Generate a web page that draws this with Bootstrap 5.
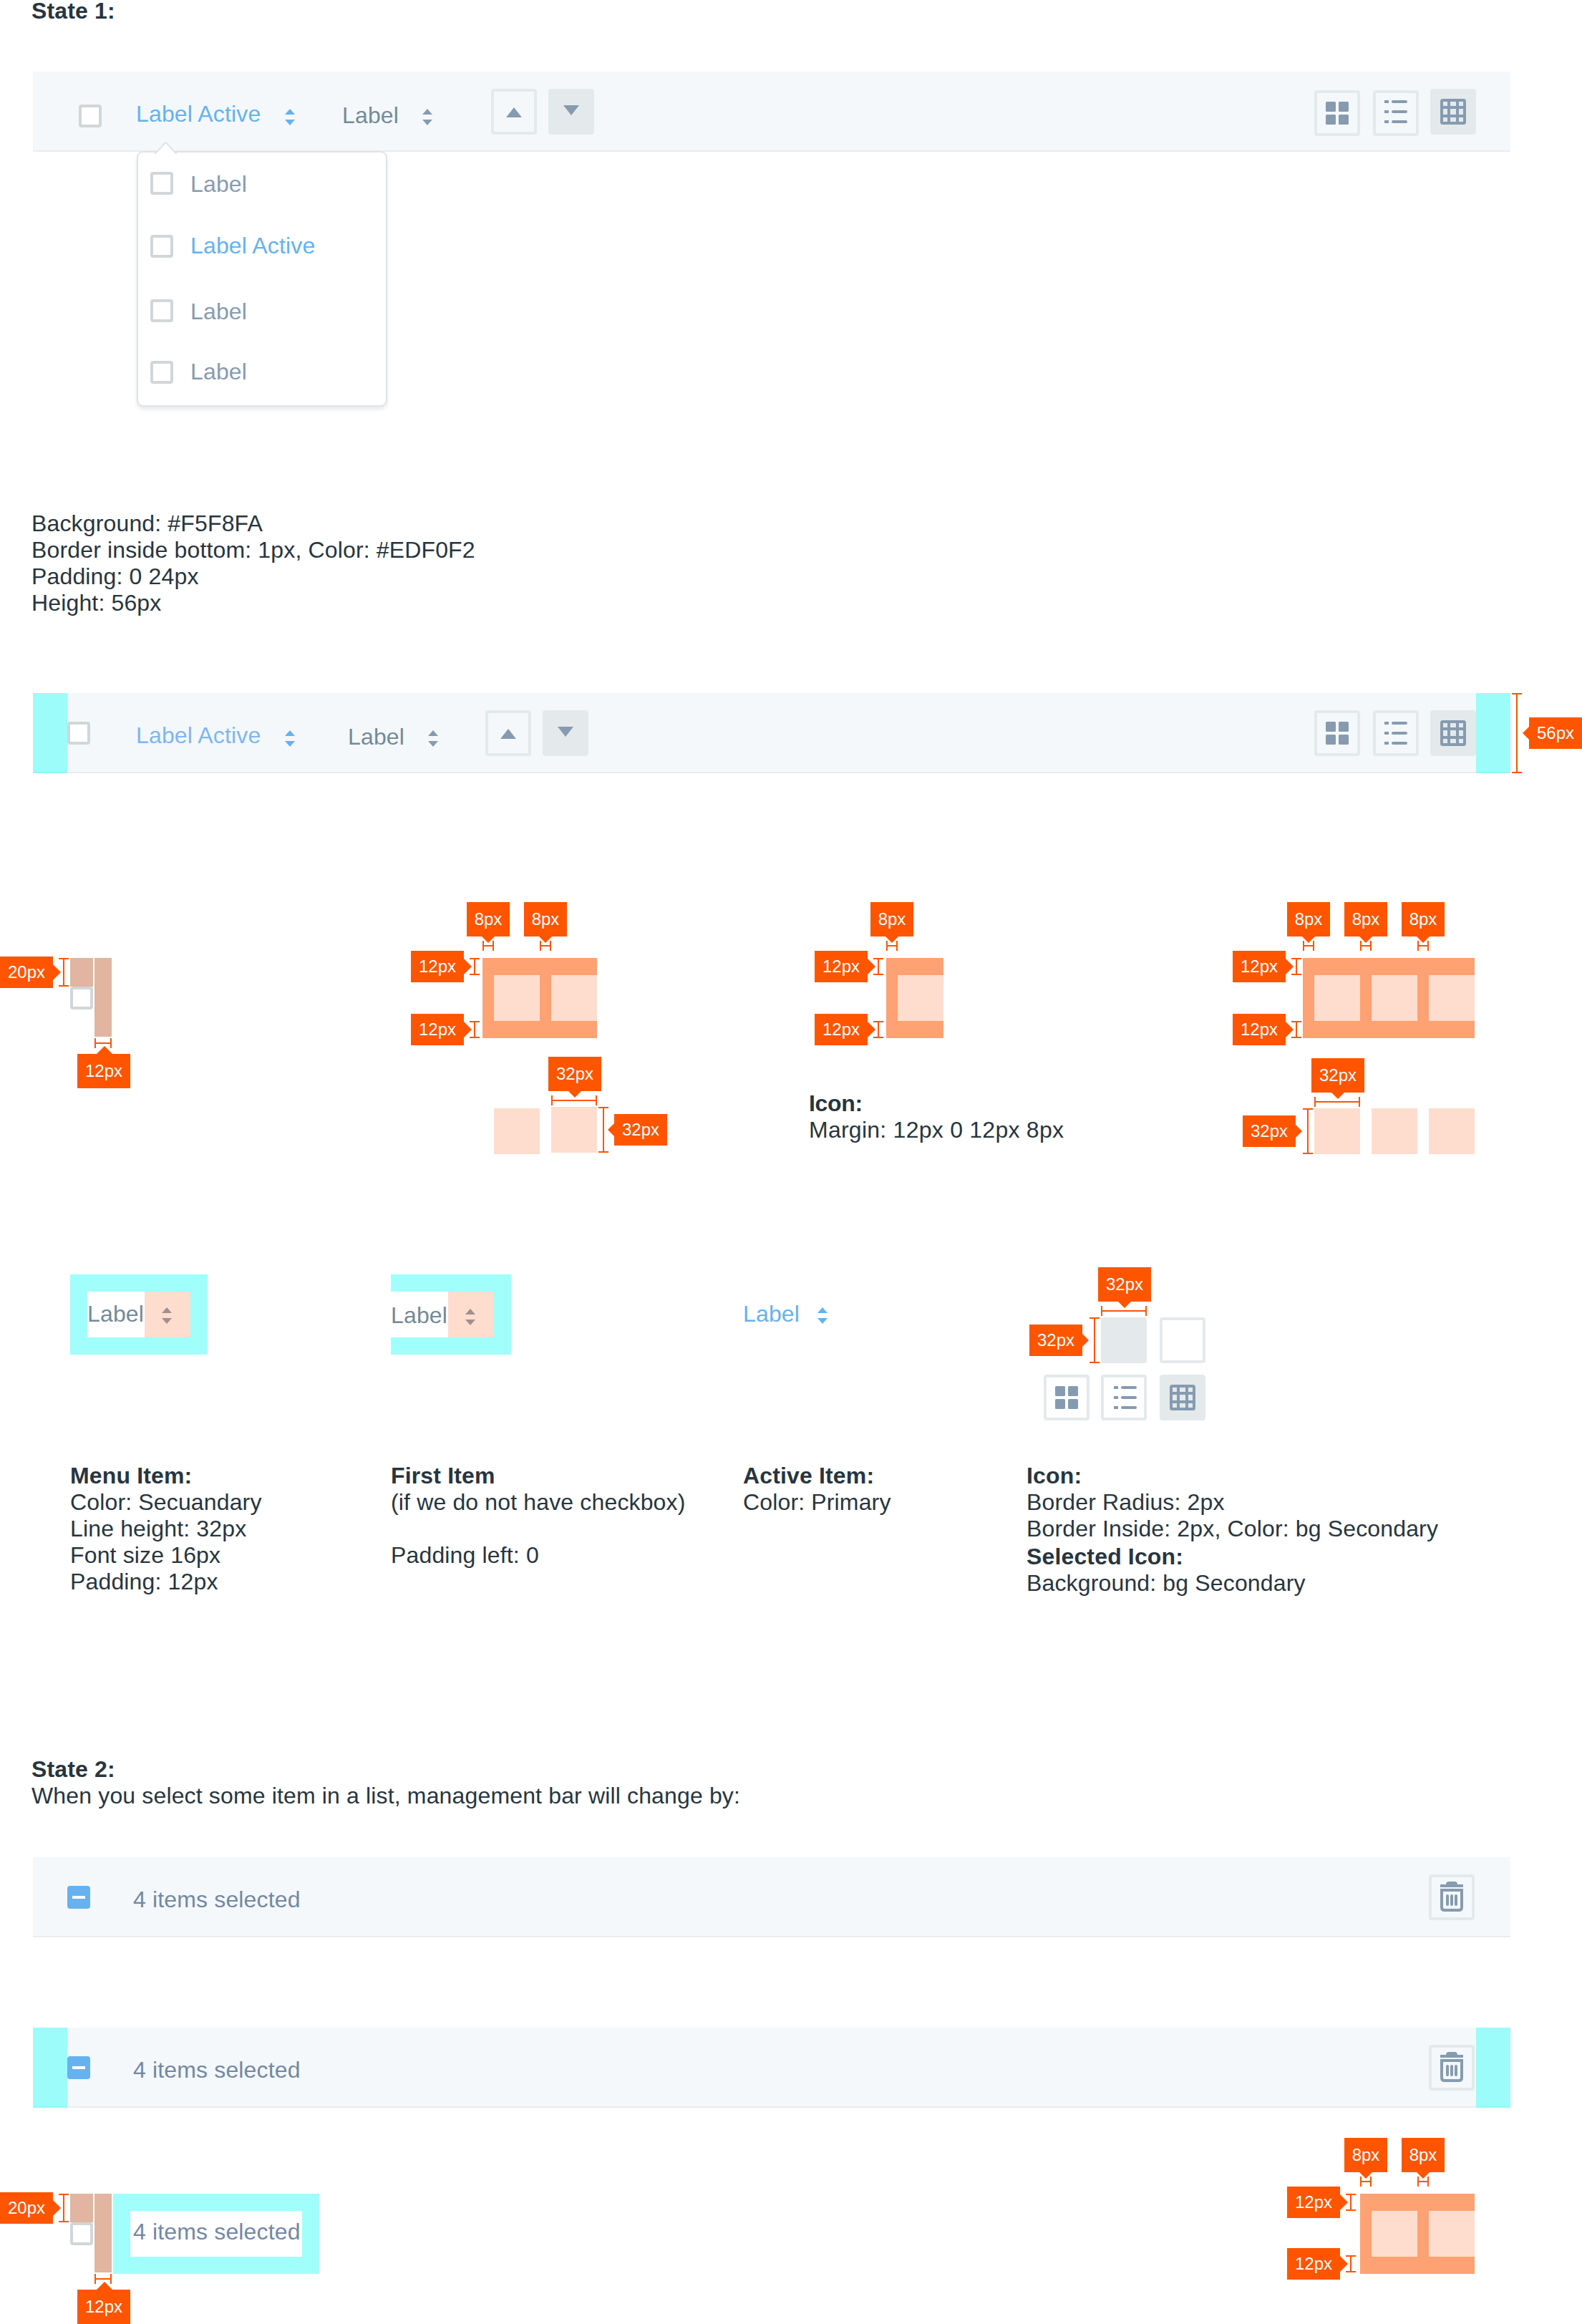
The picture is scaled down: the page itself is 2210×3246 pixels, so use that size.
<!DOCTYPE html>
<html lang="en">
<head>
<meta charset="utf-8">
<meta name="viewport" content="width=device-width, initial-scale=1">
<title>Management bar</title>
<link href="https://cdn.jsdelivr.net/npm/bootstrap@5.3.0/dist/css/bootstrap.min.css" rel="stylesheet">
<style>
  :root { --ink:#28353f; --slate:#869bb0; --label:#748a99; --sel:#7388a5; --blue:#64b2f1; --edge:#e4e9eb; --box:#d1d6d9;
          --hot:#ff5500; --pad:#fea173; --cell:#feddce; --tan:#e1b59f; --cyan:rgba(65,255,247,.5); }
  body { font-family:"Liberation Sans", Arial, sans-serif; font-size:32px; line-height:37px; letter-spacing:.15px; color:var(--ink); background:#fff; }
  .sheet { width:2210px; height:3246px; overflow:hidden; }
  p { margin:0; white-space:nowrap; }
  svg { display:block; flex:none; }
  .note { padding-left:44px; }
  .title-top { line-height:30px; margin-bottom:70px; }
  .note-spec { margin-top:501px; margin-bottom:107px; }
  .note-state2 { margin-bottom:67px; }

  /* management bar */
  .mbar { width:2064px; height:112px; margin-left:46px; background:#f4f8fb; border-bottom:2px solid #e9edf0; }
  .edge-pad { position:absolute; top:0; bottom:-2px; width:48px; background:var(--cyan); }
  .check { width:32px; height:32px; border:4px solid var(--box); border-radius:4px; background:#fff; flex:none; }
  .minus { width:32px; height:32px; border-radius:4px; background:#66b2f1; flex:none; margin:40px 0 0 48px; padding:14px 7px; }
  .minus i { display:block; height:4px; background:#fff; }
  .c-blue { color:var(--blue); } .c-blue2 { color:#7fb6f2; } .c-label { color:var(--label); } .c-slate { color:var(--slate); } .c-sel { color:var(--sel); }
  .ibtn { width:64px; height:64px; border:4px solid var(--edge); border-radius:4px; color:var(--slate); flex:none; display:flex; align-items:center; justify-content:center; }
  .ibtn.on { background:var(--edge); }
  .t24 { margin-top:24px; } .t26 { margin-top:26px; }
  .tools { margin-right:48px; }
  .tool-list { margin-left:18px; } .tool-table { margin-left:16px; }
  .glyph-up { margin-top:2px; }
  .m1 > .check { margin:46px 0 0 64px; } .m1 .first { margin-left:48px; } .m1 .second { margin-left:66px; } .m1 .arrows { margin-left:82px; }
  .m2 > .check { margin:40px 0 0 48px; } .m2 .first { margin-left:64px; } .m2 .second { margin-left:74px; } .m2 .arrows { margin-left:66px; }
  .first p { width:208px; margin-top:41px; } .second p { width:112px; margin-top:43px; }
  .first svg, .second svg { margin-top:52px; }
  .selected-text { margin:41px 0 0 60px; }
  .trash-btn { margin-right:50px; padding-bottom:2px; }

  /* dropdown */
  .drop { position:absolute; left:145px; top:111px; width:350px; height:357px; background:#fff; border:2px solid #dfe4e7; border-radius:9px; padding:26px 0 0 17px; box-shadow:0 4px 5px rgba(60,90,110,.12); }
  .drop .caret { position:absolute; left:23px; top:-15px; }
  .drop .opt { height:86px; gap:24px; } .drop .opt:nth-of-type(2) { height:92px; } .drop .opt:nth-of-type(3) { height:84px; }
  .drop .check { margin-top:1px; } .drop .opt:nth-of-type(even) .check { margin-top:3px; }

  /* measurement marks */
  .dim { position:absolute; }
  .dim::before { content:""; position:absolute; background:var(--hot); }
  .dim-top, .dim-bottom { left:0; right:0; height:14px; border:solid var(--hot); border-width:0 2px; }
  .dim-top::before, .dim-bottom::before { left:0; right:0; top:6px; height:2px; }
  .dim-left, .dim-right { top:0; bottom:0; width:14px; border:solid var(--hot); border-width:2px 0; }
  .dim-left::before, .dim-right::before { top:0; bottom:0; left:6px; width:2px; }
  .dim-top { bottom:calc(100% + 2px); } .dim-bottom { top:calc(100% + 2px); }
  .dim-left { right:calc(100% + 2px); } .dim-right { left:calc(100% + 2px); }
  .dim-top.far { bottom:calc(100% + 34px); } .dim-left.far { right:calc(100% + 4px); }
  .d4 .dim-left.far { right:calc(100% + 2px); } .d5 .dim-left.far { right:calc(100% + 6px); }
  .tagx { position:absolute; width:74px; height:44px; background:var(--hot); color:#fff; font-size:24px; line-height:44px; letter-spacing:0; text-align:center; }
  .tagx::after { content:""; position:absolute; border:9px solid transparent; }
  .dim-left .tagx, .dim-right .tagx { top:calc(50% - 22px); }
  .dim-left .tagx { right:calc(100% + 8px); } .dim-left.w32 .tagx { right:calc(100% + 10px); }
  .dim-right .tagx { left:calc(100% + 8px); } .dim-right.w56 .tagx { left:calc(100% + 10px); }
  .dim-left .tagx::after { left:100%; top:11px; border-width:11px 0 11px 11px; border-left-color:var(--hot); }
  .dim-left.w32 .tagx::after { top:13px; border-width:9px 0 9px 9px; }
  .dim-right .tagx::after { right:100%; top:13px; border-width:9px 9px 9px 0; border-right-color:var(--hot); }
  .dim-top .tagx, .dim-bottom .tagx { height:48px; line-height:48px; left:calc(50% - 36px); }
  .dim-top .tagx { bottom:calc(100% + 6px); } .dim-bottom .tagx { top:calc(100% + 8px); }
  .dim-top.w8 .tagx { width:60px; left:calc(50% - 30px); }
  .dim-top .tagx::after { top:100%; left:calc(50% - 9px); border-width:9px 9px 0; border-top-color:var(--hot); }
  .dim-bottom .tagx::after { bottom:100%; left:calc(50% - 10px); border-width:0 11px 11px; border-bottom-color:var(--hot); }

  /* spacing diagrams */
  .diagrams { margin-top:258px; height:442px; padding-left:98px; }
  .pads { height:112px; padding:24px 0; background:var(--pad); position:relative; }
  .gut { width:16px; position:relative; flex:none; }
  .cellx { width:64px; height:64px; background:var(--cell); position:relative; flex:none; }
  .band { position:absolute; left:0; width:1px; height:24px; }
  .band.up { top:0; } .band.down { bottom:0; }
  .ckpad { gap:2px; width:58px; flex:none; }
  .tan-a { width:32px; height:40px; background:var(--tan); position:relative; }
  .tan-b { width:24px; height:110px; background:var(--tan); position:relative; }
  .d2 { margin-left:518px; width:160px; } .d3 { margin-left:404px; width:80px; } .d4 { margin-left:502px; width:240px; }
  .squares { gap:16px; margin-top:98px; }
  .d2 .squares { padding-left:16px; } .d2 .cellx.lift { margin-top:-2px; }
  .d4 .squares { padding-left:16px; }
  .icon-note { margin:73px 0 0 -108px; letter-spacing:.25px; } .icon-note b { letter-spacing:-.3px; }

  /* item states */
  .demo { height:263px; }
  .k1 { padding-left:98px; width:546px; } .k2 { width:492px; } .k3 { width:396px; }
  .frame { height:112px; border:24px solid #a0fffb; width:192px; }
  .frame.open { width:168px; border-left:0; }
  .frame p { width:80px; padding-top:13px; } .frame.open p { padding-top:15px; }
  .sortcell { width:64px; background:var(--cell); color:#a18f8e; padding:22px 0 0 24px; } .frame.open .sortcell { padding-top:24px; }
  .k3 .demo p { width:104px; margin-top:37px; } .k3 .demo svg { margin-top:46px; }
  .k4 .demo { padding-top:60px; }
  .r1 { padding-left:104px; gap:18px; margin-bottom:16px; } .r2 { padding-left:24px; gap:16px; } .r2 .on { margin-left:2px; }
  .states { height:673px; }
  .sel-gap { margin-top:2px; }

  .bar3 { margin-bottom:126px; }
  .bottom { margin-top:120px; height:182px; padding-left:98px; }
  .items-frame { width:288px; height:112px; border:24px solid #a0fffb; margin-left:2px; padding:11px 0 0 4px; }
  .d5 { width:160px; margin-left:1454px; } .d5 .band.down { bottom:2px; }
</style>
<script src="https://cdn.jsdelivr.net/npm/bootstrap@5.3.0/dist/js/bootstrap.bundle.min.js"></script>
</head>
<body>
<svg width="0" height="0" class="position-absolute" aria-hidden="true">
  <symbol id="sort" viewBox="0 0 14 23"><path fill="currentColor" d="M7 0l7 8H0zM0 15h14l-7 8z"/></symbol>
  <symbol id="up" viewBox="0 0 22 14"><path fill="currentColor" d="M11 0l11 14H0z"/></symbol>
  <symbol id="down" viewBox="0 0 22 14"><path fill="currentColor" d="M0 0h22L11 14z"/></symbol>
  <symbol id="tiles" viewBox="0 0 32 32"><g fill="currentColor"><rect width="14" height="14" rx="1.5"/><rect x="18" width="14" height="14" rx="1.5"/><rect y="18" width="14" height="14" rx="1.5"/><rect x="18" y="18" width="14" height="14" rx="1.5"/></g></symbol>
  <symbol id="list" viewBox="0 0 32 32"><path fill="currentColor" d="M0 0h6v4H0zM0 14h6v4H0zM0 28h6v4H0z"/><path stroke="currentColor" stroke-width="4" stroke-linecap="round" d="M12 2h18M12 16h18M12 30h18"/></symbol>
  <symbol id="table" viewBox="0 0 36 36"><rect x="2" y="2" width="32" height="32" rx="1.5" fill="none" stroke="currentColor" stroke-width="4"/><path stroke="currentColor" stroke-width="4" d="M12 2v32M24 2v32M2 12h32M2 24h32"/></symbol>
  <symbol id="trash" viewBox="0 0 32 42"><path fill="currentColor" d="M0 4h8c0-2.500 1.500-4 4-4h8c2.500 0 4 1.500 4 4h8v4H0z"/><path fill="none" stroke="currentColor" stroke-width="4" d="M2 12h28v24q0 4-4 4H6q-4 0-4-4z"/><path stroke="currentColor" stroke-width="4" stroke-linecap="round" d="M10 20v12M16 20v12M22 20v12"/></symbol>
</svg>

<main class="sheet position-relative">
  <p class="note title-top fw-bold">State 1:</p>

  <div class="mbar m1 d-flex align-items-start position-relative">
    <span class="check"></span>
    <div class="first d-flex c-blue"><p>Label Active</p><svg width="14" height="23"><use href="#sort"/></svg></div>
    <div class="second d-flex"><p class="c-label">Label</p><svg class="c-slate" width="14" height="23"><use href="#sort"/></svg></div>
    <div class="arrows d-flex gap-3 t24">
      <span class="ibtn"><svg class="glyph-up" width="22" height="14"><use href="#up"/></svg></span>
      <span class="ibtn on"><svg class="mb-1" width="22" height="14"><use href="#down"/></svg></span>
    </div>
    <div class="tools ms-auto d-flex">
      <span class="ibtn t26"><svg width="32" height="32"><use href="#tiles"/></svg></span>
      <span class="ibtn t26 tool-list"><svg class="mb-1" width="32" height="32"><use href="#list"/></svg></span>
      <span class="ibtn on t24 tool-table"><svg width="36" height="36"><use href="#table"/></svg></span>
    </div>
    <div class="drop">
      <svg class="caret" width="32" height="18" viewBox="0 0 32 18"><path d="M0 15H2L14.500 2Q15.500 1 16.500 2L29 15H31V18H0z" fill="#fff"/><path d="M0 16H1.500L14.500 2Q15.500 1 16.500 2L29.500 16H31" fill="none" stroke="#dfe4e7" stroke-width="2"/></svg>
      <div class="opt d-flex align-items-start"><span class="check"></span><p class="c-slate">Label</p></div>
      <div class="opt d-flex align-items-start"><span class="check"></span><p class="c-blue">Label Active</p></div>
      <div class="opt d-flex align-items-start"><span class="check"></span><p class="c-slate">Label</p></div>
      <div class="opt d-flex align-items-start"><span class="check"></span><p class="c-slate">Label</p></div>
    </div>
  </div>

  <div class="note note-spec">
    <p>Background: #F5F8FA</p>
    <p>Border inside bottom: 1px, Color: #EDF0F2</p>
    <p>Padding: 0 24px</p>
    <p>Height: 56px</p>
  </div>

  <div class="mbar m2 d-flex align-items-start position-relative">
    <span class="edge-pad start-0"></span>
    <span class="check"></span>
    <div class="first d-flex c-blue"><p class="c-blue2">Label Active</p><svg width="14" height="23"><use href="#sort"/></svg></div>
    <div class="second d-flex"><p class="c-label">Label</p><svg class="c-slate" width="14" height="23"><use href="#sort"/></svg></div>
    <div class="arrows d-flex gap-3 t24">
      <span class="ibtn"><svg class="glyph-up" width="22" height="14"><use href="#up"/></svg></span>
      <span class="ibtn on"><svg class="mb-1" width="22" height="14"><use href="#down"/></svg></span>
    </div>
    <div class="tools ms-auto d-flex t24">
      <span class="ibtn"><svg width="32" height="32"><use href="#tiles"/></svg></span>
      <span class="ibtn tool-list"><svg width="32" height="32"><use href="#list"/></svg></span>
      <span class="ibtn on tool-table"><svg width="36" height="36"><use href="#table"/></svg></span>
    </div>
    <span class="edge-pad end-0"><span class="dim dim-right w56"><span class="tagx">56px</span></span></span>
  </div>

  <section class="diagrams d-flex align-items-start">
    <div class="ckpad d-flex align-items-start">
      <div><div class="tan-a"><span class="dim dim-left"><span class="tagx">20px</span></span></div><div class="check"></div></div>
      <div class="tan-b"><span class="dim dim-bottom"><span class="tagx">12px</span></span></div>
    </div>
    <div class="d2">
      <div class="pads d-flex">
        <span class="band up"><span class="dim dim-left far"><span class="tagx">12px</span></span></span>
        <span class="band down"><span class="dim dim-left far"><span class="tagx">12px</span></span></span>
        <span class="gut"><span class="dim dim-top w8 far"><span class="tagx">8px</span></span></span><span class="cellx"></span>
        <span class="gut"><span class="dim dim-top w8 far"><span class="tagx">8px</span></span></span><span class="cellx"></span>
      </div>
      <div class="squares d-flex"><span class="cellx"></span>
        <span class="cellx lift"><span class="dim dim-top"><span class="tagx">32px</span></span><span class="dim dim-right"><span class="tagx">32px</span></span></span>
      </div>
    </div>
    <div class="d3">
      <div class="pads d-flex">
        <span class="band up"><span class="dim dim-left far"><span class="tagx">12px</span></span></span>
        <span class="band down"><span class="dim dim-left far"><span class="tagx">12px</span></span></span>
        <span class="gut"><span class="dim dim-top w8 far"><span class="tagx">8px</span></span></span><span class="cellx"></span>
      </div>
      <div class="icon-note"><p><b>Icon:</b></p><p>Margin: 12px 0 12px 8px</p></div>
    </div>
    <div class="d4">
      <div class="pads d-flex">
        <span class="band up"><span class="dim dim-left far"><span class="tagx">12px</span></span></span>
        <span class="band down"><span class="dim dim-left far"><span class="tagx">12px</span></span></span>
        <span class="gut"><span class="dim dim-top w8 far"><span class="tagx">8px</span></span></span><span class="cellx"></span>
        <span class="gut"><span class="dim dim-top w8 far"><span class="tagx">8px</span></span></span><span class="cellx"></span>
        <span class="gut"><span class="dim dim-top w8 far"><span class="tagx">8px</span></span></span><span class="cellx"></span>
      </div>
      <div class="squares d-flex">
        <span class="cellx"><span class="dim dim-top"><span class="tagx">32px</span></span><span class="dim dim-left w32"><span class="tagx">32px</span></span></span>
        <span class="cellx"></span><span class="cellx"></span>
      </div>
    </div>
  </section>

  <section class="states d-flex align-items-start">
    <div class="k1">
      <div class="demo"><div class="frame d-flex"><p class="c-label">Label</p><span class="sortcell"><svg width="14" height="23"><use href="#sort"/></svg></span></div></div>
      <p><b>Menu Item:</b></p><p>Color: Secuandary</p><p>Line height: 32px</p><p>Font size 16px</p><p>Padding: 12px</p>
    </div>
    <div class="k2">
      <div class="demo"><div class="frame open d-flex"><p class="c-label">Label</p><span class="sortcell"><svg width="14" height="23"><use href="#sort"/></svg></span></div></div>
      <p><b>First Item</b></p><p>(if we do not have checkbox)</p><p>&nbsp;</p><p>Padding left: 0</p>
    </div>
    <div class="k3">
      <div class="demo d-flex align-items-start c-blue"><p>Label</p><svg width="14" height="23"><use href="#sort"/></svg></div>
      <p><b>Active Item:</b></p><p>Color: Primary</p>
    </div>
    <div class="k4">
      <div class="demo">
        <div class="r1 d-flex">
          <span class="ibtn on position-relative border-0"><span class="dim dim-top"><span class="tagx">32px</span></span><span class="dim dim-left w32"><span class="tagx">32px</span></span></span>
          <span class="ibtn"></span>
        </div>
        <div class="r2 d-flex">
          <span class="ibtn"><svg width="32" height="32"><use href="#tiles"/></svg></span>
          <span class="ibtn ps-1"><svg width="32" height="32"><use href="#list"/></svg></span>
          <span class="ibtn on"><svg width="36" height="36"><use href="#table"/></svg></span>
        </div>
      </div>
      <p><b>Icon:</b></p><p>Border Radius: 2px</p><p>Border Inside: 2px, Color: bg Secondary</p><p class="sel-gap"><b>Selected Icon:</b></p><p>Background: bg Secondary</p>
    </div>
  </section>

  <div class="note note-state2"><p><b>State 2:</b></p><p>When you select some item in a list, management bar will change by:</p></div>

  <div class="mbar bar3 d-flex align-items-start">
    <span class="minus"><i></i></span><p class="selected-text c-sel">4 items selected</p>
    <span class="ibtn trash-btn ms-auto t24"><svg width="32" height="42"><use href="#trash"/></svg></span>
  </div>
  <div class="mbar d-flex align-items-start position-relative">
    <span class="edge-pad start-0"></span>
    <span class="minus"><i></i></span><p class="selected-text c-sel">4 items selected</p>
    <span class="ibtn trash-btn ms-auto t24"><svg width="32" height="42"><use href="#trash"/></svg></span>
    <span class="edge-pad end-0"></span>
  </div>

  <section class="bottom d-flex align-items-start">
    <div class="ckpad d-flex align-items-start">
      <div><div class="tan-a"><span class="dim dim-left"><span class="tagx">20px</span></span></div><div class="check"></div></div>
      <div class="tan-b"><span class="dim dim-bottom"><span class="tagx">12px</span></span></div>
    </div>
    <div class="items-frame"><p class="c-sel">4 items selected</p></div>
    <div class="d5">
      <div class="pads d-flex">
        <span class="band up"><span class="dim dim-left far"><span class="tagx">12px</span></span></span>
        <span class="band down"><span class="dim dim-left far"><span class="tagx">12px</span></span></span>
        <span class="gut"><span class="dim dim-top w8 far"><span class="tagx">8px</span></span></span><span class="cellx"></span>
        <span class="gut"><span class="dim dim-top w8 far"><span class="tagx">8px</span></span></span><span class="cellx"></span>
      </div>
    </div>
  </section>
</main>
</body>
</html>
